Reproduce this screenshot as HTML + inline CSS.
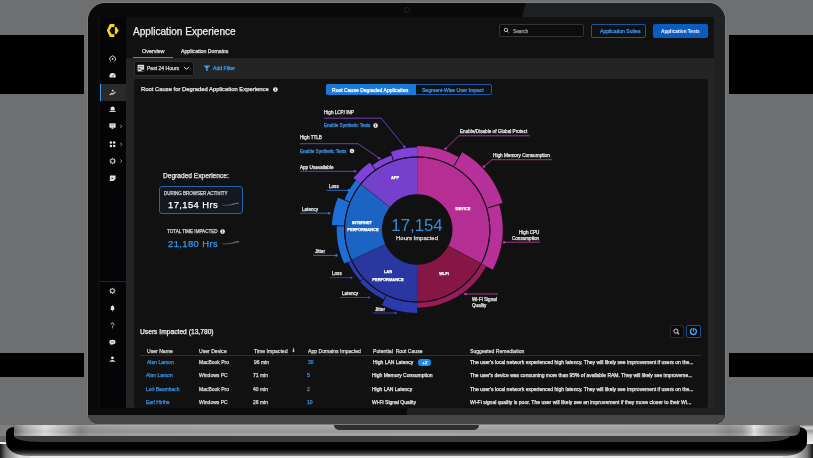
<!DOCTYPE html>
<html><head><meta charset="utf-8">
<style>
html,body{margin:0;padding:0;}
body{width:813px;height:458px;overflow:hidden;position:relative;background:#6e6f71;font-family:"Liberation Sans", sans-serif;}
.a{position:absolute;}
.t{position:absolute;white-space:nowrap;will-change:transform;-webkit-text-stroke:0.25px currentColor;}
svg{position:absolute;left:0;top:0;}
</style></head><body>
<!-- background artifacts -->
<div class="a" style="left:0;top:35px;width:84px;height:59px;background:#000"></div>
<div class="a" style="left:729px;top:35px;width:84px;height:59px;background:#000"></div>
<div class="a" style="left:0;top:353px;width:84px;height:24px;background:#000"></div>
<div class="a" style="left:729px;top:353px;width:84px;height:24px;background:#000"></div>
<!-- bottom background -->
<div class="a" style="left:0;top:425px;width:20px;height:11px;background:#7f7f7f"></div>
<div class="a" style="left:0;top:436px;width:20px;height:6px;background:#676767"></div>
<div class="a" style="left:793px;top:425px;width:20px;height:17px;background:linear-gradient(180deg,#8a8a8a 0,#d8d8d8 3px,#9a9a9a 6px,#d0d0d0 10px,#e8e8e8 17px)"></div>
<div class="a" style="left:0;top:441.5px;width:813px;height:17px;background:linear-gradient(180deg,#f0f0f0 0,#f0f0f0 2px,#c8c8c8 6px,#eee 16px)"></div>
<div class="a" style="left:0;top:443.5px;width:30px;height:15px;background:linear-gradient(90deg,#151515 0,#777 6px,#ddd 20px)"></div>
<div class="a" style="left:783px;top:443.5px;width:30px;height:15px;background:linear-gradient(270deg,#151515 0,#777 6px,#ddd 20px)"></div>
<!-- base shadow -->
<div class="a" style="left:6px;top:427px;width:801px;height:29px;background:linear-gradient(180deg,#000 0,#000 22px,#333 26px,#888 29px);border-radius:8px 8px 22px 22px / 6px 6px 14px 14px;"></div>
<!-- laptop lid -->
<div class="a" style="left:86.6px;top:2px;width:639.2px;height:423px;background:#7c7d7f;border-radius:18px 18px 11px 11px;"></div>
<div class="a" style="left:87.9px;top:3px;width:636.9px;height:421px;background:#0a0a0b;border-radius:17px 17px 10px 10px;overflow:hidden;">
  <div class="a" style="left:0;top:0;width:700px;height:430px;background:#1f2022;clip-path:polygon(438.1px 0,700px 0,700px 430px,319.1px 430px);"></div>
  <div class="a" style="left:-2px;top:412px;width:700px;height:12px;background:#454545;"></div>
</div>
<div class="a" style="left:403.8px;top:7.3px;width:4px;height:4px;border-radius:50%;border:0.8px solid #222;"></div>
<!-- base bar -->
<div class="a" style="left:14px;top:425px;width:786px;height:11px;border-radius:0 0 7px 0 / 0 0 6px 0;background:linear-gradient(90deg,#6a6a6a 0,#a8a8a8 11px,#dcdcdc 31px,#b0b0b0 52px,#858585 67px,#949494 76px,#9c9c9c 120px,#a2a2a2 400px,#9e9e9e 700px,#8a8a8a 715px,#9a9a9a 728px,#c8c8c8 737px,#e6e6e6 740px,#b0b0b0 752px,#777 770px,#4a4a4a 786px);"></div>
<div class="a" style="left:14px;top:425px;width:786px;height:11px;border-radius:0 0 7px 0 / 0 0 6px 0;background:linear-gradient(180deg,rgba(255,255,255,0.14) 0,rgba(255,255,255,0.03) 3px,rgba(0,0,0,0.06) 7px,rgba(255,255,255,0.10) 10px,rgba(0,0,0,0.1) 11px);"></div>
<div class="a" style="left:334px;top:425px;width:145px;height:5px;background:#2e2e2e;border-radius:0 0 6px 6px;"></div>
<div class="a" style="left:14px;top:436px;width:776px;height:6px;background:#3a3a3a;border-radius:0 0 30px 26px/0 0 6px 6px;"></div>
<!-- screen -->
<div class="a" style="left:100px;top:17px;width:614px;height:391px;background:#242424;overflow:hidden;">
  <div class="a" style="left:0;top:0;width:26px;height:391px;background:#050507;"></div>
  <div class="a" style="left:26px;top:0;width:588px;height:41px;background:#111111;"></div>
</div>
<div class="a" style="left:100px;top:281.2px;width:26px;height:0.9px;background:#262626;"></div>
<div class="a" style="left:99.3px;top:17px;width:0.8px;height:391px;background:#121214;"></div>
<!-- sidebar active -->
<div class="a" style="left:100px;top:84px;width:26px;height:17px;background:#2a2a2a;"></div>
<div class="a" style="left:99.5px;top:84px;width:1.6px;height:17px;background:#3a9ae8;"></div>
<!-- tab underline -->
<div class="a" style="left:133px;top:56.5px;width:39.5px;height:1.3px;background:#3a8fd8;"></div>
<!-- search -->
<div class="a" style="left:499px;top:23.5px;width:85px;height:13.5px;box-sizing:border-box;border:0.8px solid #333;border-radius:2px;background:#0d0d0d;"></div>
<div class="a" style="left:591.3px;top:23.5px;width:55px;height:14px;box-sizing:border-box;border:0.9px solid #1f5598;border-radius:2px;"></div>
<div class="a" style="left:652.7px;top:23.5px;width:55px;height:14px;border-radius:2px;background:#0b5cbf;"></div>
<!-- filter dropdown -->
<div class="a" style="left:133.8px;top:61.4px;width:60.5px;height:14.3px;box-sizing:border-box;border:0.8px solid #2e2e2e;border-radius:2px;background:#0d0d0d;"></div>
<!-- card -->
<div class="a" style="left:133.5px;top:79.2px;width:574.3px;height:329px;background:#111111;border-radius:3px;"></div>
<!-- toggle -->
<div class="a" style="left:325.9px;top:84.3px;width:166.3px;height:10.6px;box-sizing:border-box;border:0.8px solid #1b57a6;border-radius:2px;"></div>
<div class="a" style="left:325.9px;top:84.3px;width:89.7px;height:10.6px;background:#1a78d8;border-radius:2px 0 0 2px;"></div>
<!-- stat box -->
<div class="a" style="left:159.2px;top:186.2px;width:83.6px;height:27.8px;box-sizing:border-box;border:0.9px solid #2a64a8;border-radius:3px;background:#141820;"></div>
<!-- table header line -->
<div class="a" style="left:140px;top:354.7px;width:561px;height:0.7px;background:#2e2e2e;"></div>
<!-- badge -->
<div class="a" style="left:417.8px;top:359.3px;width:13.6px;height:6.5px;border-radius:3.2px;background:#1a8cf0;"></div>
<!-- icon buttons -->
<div class="a" style="left:669.5px;top:324.6px;width:14.4px;height:13.7px;box-sizing:border-box;border:0.8px solid #282828;border-radius:2px;background:#0a0a0a;"></div>
<div class="a" style="left:686px;top:324.6px;width:14.5px;height:13.7px;box-sizing:border-box;border:0.9px solid #1c4f94;border-radius:2px;background:#07090c;"></div>
<!-- screen bottom clip: laptop bezel below screen -->
<div class="a" style="left:87.9px;top:408px;width:636.9px;height:6.5px;background:#0a0a0b;"></div>
<div class="a" style="left:87.9px;top:408px;width:636.9px;height:6.5px;background:#1f2022;clip-path:polygon(319.6px 0,637px 0,637px 7px,318.6px 7px);"></div>
<div class="a" style="left:714px;top:17px;width:10.5px;height:391px;background:#1f2022;"></div>

<svg width="813" height="458" viewBox="0 0 813 458">
<defs><linearGradient id="spk" x1="0" x2="1" y1="0" y2="0"><stop offset="0" stop-color="#2a3550"/><stop offset="1" stop-color="#777"/></linearGradient></defs>
<path d="M417.20,157.40 A72.1,72.1 0 0 1 480.86,263.35 L448.37,246.07 A35.3,35.3 0 0 0 417.20,194.20 Z" fill="#b52e93" />
<path d="M480.86,263.35 A72.1,72.1 0 0 1 417.20,301.60 L417.20,264.80 A35.3,35.3 0 0 0 448.37,246.07 Z" fill="#861646" />
<path d="M417.20,301.60 A72.1,72.1 0 0 1 351.86,259.97 L385.21,244.42 A35.3,35.3 0 0 0 417.20,264.80 Z" fill="#2a37a0" />
<path d="M351.86,259.97 A72.1,72.1 0 0 1 361.17,184.13 L389.77,207.28 A35.3,35.3 0 0 0 385.21,244.42 Z" fill="#1b64c4" />
<path d="M361.17,184.13 A72.1,72.1 0 0 1 417.20,157.40 L417.20,194.20 A35.3,35.3 0 0 0 389.77,207.28 Z" fill="#7540cc" />
<path d="M417.20,146.10 A83.4,83.4 0 0 1 458.90,157.27 L453.75,166.19 A73.1,73.1 0 0 0 417.20,156.40 Z" fill="#b8309a" />
<path d="M461.95,151.99 A89.5,89.5 0 0 1 502.79,203.33 L487.11,208.13 A73.1,73.1 0 0 0 453.75,166.19 Z" fill="#b8309a" />
<path d="M499.06,204.47 A85.6,85.6 0 0 1 492.78,269.69 L481.74,263.82 A73.1,73.1 0 0 0 487.11,208.13 Z" fill="#b8309a" />
<path d="M486.25,266.21 A78.2,78.2 0 0 1 417.20,307.70 L417.20,302.60 A73.1,73.1 0 0 0 481.74,263.82 Z" fill="#981c5a" />
<path d="M417.20,313.00 A83.5,83.5 0 0 1 381.52,304.99 L385.96,295.59 A73.1,73.1 0 0 0 417.20,302.60 Z" fill="#2c3bb0" />
<path d="M384.08,299.57 A77.5,77.5 0 0 1 359.97,281.76 L363.22,278.79 A73.1,73.1 0 0 0 385.96,295.59 Z" fill="#2c3bb0" />
<path d="M360.71,281.08 A76.5,76.5 0 0 1 347.87,261.83 L350.95,260.39 A73.1,73.1 0 0 0 363.22,278.79 Z" fill="#2c3bb0" />
<path d="M344.24,263.52 A80.5,80.5 0 0 1 336.79,225.71 L344.18,226.06 A73.1,73.1 0 0 0 350.95,260.39 Z" fill="#1e6ed6" />
<path d="M331.79,225.47 A85.5,85.5 0 0 1 338.04,197.19 L349.52,201.88 A73.1,73.1 0 0 0 344.18,226.06 Z" fill="#1e6ed6" />
<path d="M344.43,199.80 A78.6,78.6 0 0 1 356.12,180.04 L360.39,183.50 A73.1,73.1 0 0 0 349.52,201.88 Z" fill="#1e6ed6" />
<path d="M353.47,177.90 A82.0,82.0 0 0 1 370.17,162.33 L375.27,169.62 A73.1,73.1 0 0 0 360.39,183.50 Z" fill="#7f42da" />
<path d="M372.17,165.20 A78.5,78.5 0 0 1 391.64,155.28 L393.40,160.38 A73.1,73.1 0 0 0 375.27,169.62 Z" fill="#7f42da" />
<path d="M390.54,152.06 A81.9,81.9 0 0 1 417.20,147.60 L417.20,156.40 A73.1,73.1 0 0 0 393.40,160.38 Z" fill="#7f42da" />
<line x1="453.75" y1="166.19" x2="463.20" y2="149.83" stroke="#111" stroke-width="0.9"/>
<line x1="487.11" y1="208.13" x2="505.18" y2="202.60" stroke="#111" stroke-width="0.9"/>
<line x1="385.96" y1="295.59" x2="377.88" y2="312.68" stroke="#111" stroke-width="0.9"/>
<line x1="363.22" y1="278.79" x2="349.26" y2="291.54" stroke="#111" stroke-width="0.9"/>
<line x1="344.18" y1="226.06" x2="325.30" y2="225.17" stroke="#111" stroke-width="0.9"/>
<line x1="349.52" y1="201.88" x2="332.02" y2="194.74" stroke="#111" stroke-width="0.9"/>
<line x1="375.27" y1="169.62" x2="364.43" y2="154.14" stroke="#111" stroke-width="0.9"/>
<line x1="393.40" y1="160.38" x2="387.25" y2="142.51" stroke="#111" stroke-width="0.9"/>
<line x1="448.37" y1="246.07" x2="480.86" y2="263.35" stroke="#222" stroke-width="0.6" opacity="0.7"/>
<line x1="385.21" y1="244.42" x2="351.86" y2="259.97" stroke="#222" stroke-width="0.6" opacity="0.7"/>
<line x1="389.77" y1="207.28" x2="361.17" y2="184.13" stroke="#222" stroke-width="0.6" opacity="0.7"/>
<circle cx="417.2" cy="229.5" r="72.60" fill="none" stroke="#1a1020" stroke-width="1.0"/>
<polyline points="323.7,118.2 381.2,118.2 404.5,146.8" fill="none" stroke="#7a3fd0" stroke-width="0.9"/>
<circle cx="404.5" cy="146.8" r="1.3" fill="#7a3fd0"/>
<polyline points="300,143.7 358.1,143.7 379.1,158.2" fill="none" stroke="#7a3fd0" stroke-width="0.9"/>
<circle cx="379.1" cy="158.2" r="1.3" fill="#7a3fd0"/>
<polyline points="300,171.3 355,171.3" fill="none" stroke="#7a3fd0" stroke-width="0.9"/>
<circle cx="355" cy="171.3" r="1.3" fill="#7a3fd0"/>
<polyline points="326.7,190.3 348.9,190.3" fill="none" stroke="#2577d6" stroke-width="0.9"/>
<circle cx="348.9" cy="190.3" r="1.3" fill="#2577d6"/>
<polyline points="300,213.2 329,213.2" fill="none" stroke="#2577d6" stroke-width="0.9"/>
<circle cx="329" cy="213.2" r="1.3" fill="#2577d6"/>
<polyline points="313,255.4 336.4,255.4" fill="none" stroke="#2577d6" stroke-width="0.9"/>
<circle cx="336.4" cy="255.4" r="1.3" fill="#2577d6"/>
<polyline points="329.5,277.7 351.2,277.7" fill="none" stroke="#3641b8" stroke-width="0.9"/>
<circle cx="351.2" cy="277.7" r="1.3" fill="#3641b8"/>
<polyline points="340,297.5 368.8,297.5" fill="none" stroke="#3641b8" stroke-width="0.9"/>
<circle cx="368.8" cy="297.5" r="1.3" fill="#3641b8"/>
<polyline points="373,313 395.5,313" fill="none" stroke="#3641b8" stroke-width="0.9"/>
<circle cx="395.5" cy="313" r="1.3" fill="#3641b8"/>
<polyline points="529.6,135.8 458.8,135.8 445.5,148.8" fill="none" stroke="#c0359f" stroke-width="0.9"/>
<circle cx="445.5" cy="148.8" r="1.3" fill="#c0359f"/>
<polyline points="552,159.7 492,159.7 483.9,166.6" fill="none" stroke="#c0359f" stroke-width="0.9"/>
<circle cx="483.9" cy="166.6" r="1.3" fill="#c0359f"/>
<polyline points="540,242.2 504.2,242.2" fill="none" stroke="#c0359f" stroke-width="0.9"/>
<circle cx="504.2" cy="242.2" r="1.3" fill="#c0359f"/>
<polyline points="498,294 465.4,294" fill="none" stroke="#c0359f" stroke-width="0.9"/>
<circle cx="465.4" cy="294" r="1.3" fill="#c0359f"/>
<polygon points="109.9,24 114.4,24 114.4,26.9 111.7,26.9 109.5,30.6 111.7,34.3 114.4,34.3 114.4,37.1 109.9,37.1 106.8,30.6" fill="#f7d417"/>
<polygon points="114.9,27.1 116.4,27.1 118.7,30.6 116.4,34.1 114.9,34.1" fill="#f7d417"/>
<path d="M110.9,61.3 A2.9,2.9 0 1 1 114.3,61.3" fill="none" stroke="#e4e4e4" stroke-width="0.9"/><circle cx="112.6" cy="58.9" r="0.9" fill="#e4e4e4"/>
<path d="M109.5,77.6 L109.5,76 A3.1,3.1 0 0 1 115.7,76 L115.7,77.6 Z" fill="#e4e4e4"/><line x1="112.3" y1="76.6" x2="114" y2="74.6" stroke="#050507" stroke-width="0.7"/>
<polyline points="109.7,95.1 111.6,93.5 113,94.2 115.4,91.8" fill="none" stroke="#e4e4e4" stroke-width="1.1"/><circle cx="112.7" cy="90.7" r="0.9" fill="#e4e4e4"/>
<path d="M110.6,110.4 L110.6,108.6 A2,2 0 0 1 114.6,108.6 L114.6,110.4 Z" fill="#e4e4e4"/><rect x="109.5" y="111" width="6.2" height="0.9" fill="#e4e4e4"/>
<rect x="109.4" y="123.4" width="6.2" height="4.3" fill="#e4e4e4"/><rect x="111.5" y="127.7" width="2" height="1.1" fill="#e4e4e4"/><path d="M110.8,125.3 L112.4,124.8 L114,125.6" stroke="#333" stroke-width="0.5" fill="none"/>
<polyline points="120.4,142.7 121.8,144.2 120.4,145.7" fill="none" stroke="#bbb" stroke-width="0.8"/>
<polyline points="120.4,159.5 121.8,161.0 120.4,162.5" fill="none" stroke="#bbb" stroke-width="0.8"/>
<polyline points="120.4,124.8 121.8,126.3 120.4,127.8" fill="none" stroke="#bbb" stroke-width="0.8"/>
<circle cx="110.9" cy="142.6" r="1.25" fill="#e4e4e4"/>
<circle cx="110.9" cy="145.9" r="1.25" fill="#e4e4e4"/>
<circle cx="114.2" cy="142.6" r="1.25" fill="#e4e4e4"/>
<circle cx="114.2" cy="145.9" r="1.25" fill="#e4e4e4"/>
<circle cx="112.6" cy="161.0" r="2.0" fill="none" stroke="#e4e4e4" stroke-width="0.9"/><circle cx="115.30" cy="161.00" r="0.55" fill="#e4e4e4"/><circle cx="114.51" cy="162.91" r="0.55" fill="#e4e4e4"/><circle cx="112.60" cy="163.70" r="0.55" fill="#e4e4e4"/><circle cx="110.69" cy="162.91" r="0.55" fill="#e4e4e4"/><circle cx="109.90" cy="161.00" r="0.55" fill="#e4e4e4"/><circle cx="110.69" cy="159.09" r="0.55" fill="#e4e4e4"/><circle cx="112.60" cy="158.30" r="0.55" fill="#e4e4e4"/><circle cx="114.51" cy="159.09" r="0.55" fill="#e4e4e4"/>
<path d="M109.9,175.4 L115.5,175.4 L115.5,179 L113.3,181.1 L109.9,181.1 Z" fill="#e4e4e4"/><path d="M111.6,177.2 L113.6,178.3 L111.6,179.4 Z" fill="#333"/>
<circle cx="112.4" cy="290.8" r="1.9" fill="none" stroke="#e4e4e4" stroke-width="0.9"/><circle cx="115.00" cy="290.80" r="0.55" fill="#e4e4e4"/><circle cx="114.24" cy="292.64" r="0.55" fill="#e4e4e4"/><circle cx="112.40" cy="293.40" r="0.55" fill="#e4e4e4"/><circle cx="110.56" cy="292.64" r="0.55" fill="#e4e4e4"/><circle cx="109.80" cy="290.80" r="0.55" fill="#e4e4e4"/><circle cx="110.56" cy="288.96" r="0.55" fill="#e4e4e4"/><circle cx="112.40" cy="288.20" r="0.55" fill="#e4e4e4"/><circle cx="114.24" cy="288.96" r="0.55" fill="#e4e4e4"/>
<path d="M110.4,310 L110.8,309.3 L110.8,307.4 A1.7,1.7 0 0 1 114.2,307.4 L114.2,309.3 L114.6,310 Z" fill="#e4e4e4"/><circle cx="112.5" cy="310.8" r="0.6" fill="#e4e4e4"/><rect x="112.2" y="305" width="0.6" height="0.8" fill="#e4e4e4"/>
<path d="M111.2,324.4 A1.3,1.3 0 1 1 113.2,325.4 L112.5,326 L112.5,326.6" fill="none" stroke="#e4e4e4" stroke-width="0.85"/><circle cx="112.5" cy="327.8" r="0.5" fill="#e4e4e4"/>
<ellipse cx="112.4" cy="342.1" rx="3.1" ry="2.3" fill="#e4e4e4"/><path d="M110.6,343.9 L110.2,345.2 L112,344.3 Z" fill="#e4e4e4"/><rect x="110.8" y="341.7" width="3.2" height="0.7" fill="#444"/>
<circle cx="112.4" cy="357.9" r="1.35" fill="#e4e4e4"/><path d="M109.6,361.2 Q112.4,358.9 115.2,361.2 Z" fill="#e4e4e4"/><rect x="109.6" y="361" width="5.6" height="0.6" fill="#e4e4e4"/>
<circle cx="506" cy="30" r="1.7" fill="none" stroke="#cfcfcf" stroke-width="0.85"/><line x1="507.2" y1="31.2" x2="508.5" y2="32.5" stroke="#cfcfcf" stroke-width="0.9"/>
<rect x="137.6" y="64.8" width="6.5" height="6.6" fill="#e4e4e4"/><rect x="138.3" y="66.6" width="5.1" height="0.5" fill="#111"/><rect x="138.3" y="68.3" width="2.2" height="1.2" fill="#111"/><rect x="141.5" y="69.6" width="2.6" height="1.8" fill="#111"/>
<polyline points="184.1,66.9 186.5,69.4 188.9,66.9" fill="none" stroke="#e6e6e6" stroke-width="1"/>
<path d="M203.7,65.4 L210.1,65.4 L207.6,68.5 L207.6,71.1 L206.2,71.1 L206.2,68.5 Z" fill="#3aa6f2"/>
<circle cx="275.4" cy="89.6" r="2.4" fill="#e8e8e8"/><rect x="275.05" y="89.20" width="0.7" height="1.6" fill="#111"/><circle cx="275.4" cy="88.45" r="0.4" fill="#111"/>
<circle cx="375.6" cy="125.6" r="2.3" fill="#e8e8e8"/><rect x="375.25" y="125.20" width="0.7" height="1.6" fill="#111"/><circle cx="375.6" cy="124.45" r="0.4" fill="#111"/>
<circle cx="352.0" cy="151.0" r="2.3" fill="#e8e8e8"/><rect x="351.65" y="150.60" width="0.7" height="1.6" fill="#111"/><circle cx="352.0" cy="149.85" r="0.4" fill="#111"/>
<circle cx="222.6" cy="231.6" r="2.4" fill="#e8e8e8"/><rect x="222.25" y="231.20" width="0.7" height="1.6" fill="#111"/><circle cx="222.6" cy="230.45" r="0.4" fill="#111"/>
<polyline points="222,205.3 225,205.10000000000002 227,205.4 229,204.8 231,204.9 232.5,204.20000000000002 234,204.3 235.5,203.3 237,203.5 239,203.0" fill="none" stroke="url(#spk)" stroke-width="1.2"/>
<polyline points="222,243.9 225,243.70000000000002 227,244.0 229,243.4 231,243.5 232.5,242.8 234,242.9 235.5,241.9 237,242.1 239,241.6" fill="none" stroke="url(#spk)" stroke-width="1.2"/>
<circle cx="675.9" cy="331.1" r="2.1" fill="none" stroke="#dcdcdc" stroke-width="0.95"/><line x1="677.4" y1="332.6" x2="679" y2="334.3" stroke="#dcdcdc" stroke-width="1.1"/>
<path d="M692.4,328.6 A3,3 0 1 0 694.4,328.6" fill="none" stroke="#38a6f5" stroke-width="1.5"/><line x1="693.4" y1="327.8" x2="693.4" y2="331.8" stroke="#38a6f5" stroke-width="1"/>
<line x1="293.5" y1="347.9" x2="293.5" y2="351.6" stroke="#dcdcdc" stroke-width="0.8"/><path d="M292.1,350.6 L293.5,352.6 L294.9,350.6 Z" fill="#dcdcdc"/>
</svg>
<div class="t" style="left:133.40px;top:26.75px;font-size:10.1px;line-height:10.1px;color:#eeeeee;font-weight:400;">Application Experience</div>
<div class="t" style="left:141.60px;top:49.19px;font-size:5.4px;line-height:5.4px;color:#e0e0e0;font-weight:400;">Overview</div>
<div class="t" style="left:181.00px;top:49.30px;font-size:5.2px;line-height:5.2px;color:#e0e0e0;font-weight:400;">Application Domains</div>
<div class="t" style="left:512.70px;top:29.50px;font-size:4.8px;line-height:4.8px;color:#9a9a9a;font-weight:400;">Search</div>
<div class="t" style="left:599.50px;top:28.95px;font-size:5.1px;line-height:5.1px;color:#3c95f0;font-weight:400;">Application Suites</div>
<div class="t" style="left:660.60px;top:29.56px;font-size:4.7px;line-height:4.7px;color:#ffffff;font-weight:700;-webkit-text-stroke:0;">Application Tests</div>
<div class="t" style="left:146.80px;top:65.87px;font-size:5.05px;line-height:5.05px;color:#d8d8d8;font-weight:400;">Past 24 Hours</div>
<div class="t" style="left:213.00px;top:65.82px;font-size:5.15px;line-height:5.15px;color:#3a9af0;font-weight:400;">Add Filter</div>
<div class="t" style="left:140.50px;top:86.55px;font-size:5.87px;line-height:5.87px;color:#e8e8e8;font-weight:400;">Root Cause for Degraded Application Experience</div>
<div class="t" style="left:331.70px;top:87.56px;font-size:5.07px;line-height:5.07px;color:#ffffff;font-weight:400;">Root Cause Degraded Application</div>
<div class="t" style="left:421.70px;top:87.57px;font-size:5.05px;line-height:5.05px;color:#3c95f0;font-weight:400;">Segment-Wise User Impact</div>
<div class="t" style="left:163.10px;top:172.56px;font-size:6.62px;line-height:6.62px;color:#e8e8e8;font-weight:400;">Degraded Experience:</div>
<div class="t" style="left:164.20px;top:191.86px;font-size:4.5px;line-height:4.5px;color:#cfcfcf;font-weight:400;">DURING BROWSER ACTIVITY</div>
<div class="t" style="left:167.90px;top:199.81px;font-size:9.4px;line-height:9.4px;color:#ffffff;font-weight:400;letter-spacing:0.42px;">17,154 Hrs</div>
<div class="t" style="left:167.00px;top:230.03px;font-size:4.56px;line-height:4.56px;color:#d0d0d0;font-weight:400;">TOTAL TIME IMPACTED</div>
<div class="t" style="left:167.50px;top:238.81px;font-size:9.4px;line-height:9.4px;color:#3b9ae8;font-weight:400;letter-spacing:0.42px;">21,180 Hrs</div>
<div class="t" style="left:323.70px;top:111.11px;font-size:4.6px;line-height:4.6px;color:#e8e8e8;font-weight:400;">High LCP/ INP</div>
<div class="t" style="left:323.70px;top:124.41px;font-size:4.6px;line-height:4.6px;color:#3a8fe0;font-weight:400;">Enable Synthetic Tests</div>
<div class="t" style="left:300.00px;top:136.41px;font-size:4.6px;line-height:4.6px;color:#e8e8e8;font-weight:400;">High TTLB</div>
<div class="t" style="left:300.00px;top:149.51px;font-size:4.6px;line-height:4.6px;color:#3a8fe0;font-weight:400;">Enable Synthetic Tests</div>
<div class="t" style="left:300.00px;top:165.81px;font-size:4.6px;line-height:4.6px;color:#e8e8e8;font-weight:400;">App Unavailable</div>
<div class="t" style="left:329.00px;top:184.51px;font-size:4.6px;line-height:4.6px;color:#e8e8e8;font-weight:400;">Loss</div>
<div class="t" style="left:302.00px;top:207.51px;font-size:4.6px;line-height:4.6px;color:#e8e8e8;font-weight:400;">Latency</div>
<div class="t" style="left:315.00px;top:249.61px;font-size:4.6px;line-height:4.6px;color:#e8e8e8;font-weight:400;">Jitter</div>
<div class="t" style="left:331.70px;top:271.91px;font-size:4.6px;line-height:4.6px;color:#e8e8e8;font-weight:400;">Loss</div>
<div class="t" style="left:342.00px;top:291.91px;font-size:4.6px;line-height:4.6px;color:#e8e8e8;font-weight:400;">Latency</div>
<div class="t" style="left:375.00px;top:307.71px;font-size:4.6px;line-height:4.6px;color:#e8e8e8;font-weight:400;">Jitter</div>
<div class="t" style="left:460.40px;top:130.27px;font-size:4.68px;line-height:4.68px;color:#e8e8e8;font-weight:400;">Enable/Disable of Global Protect</div>
<div class="t" style="left:493.20px;top:154.16px;font-size:4.69px;line-height:4.69px;color:#e8e8e8;font-weight:400;">High Memory Consumption</div>
<div class="t" style="right:273.50px;top:231.41px;font-size:4.6px;line-height:4.6px;color:#e8e8e8;font-weight:400;">High CPU</div>
<div class="t" style="right:273.50px;top:236.81px;font-size:4.6px;line-height:4.6px;color:#e8e8e8;font-weight:400;">Consumption</div>
<div class="t" style="left:472.00px;top:298.01px;font-size:4.6px;line-height:4.6px;color:#e8e8e8;font-weight:400;">Wi-Fi Signal</div>
<div class="t" style="left:472.00px;top:303.51px;font-size:4.6px;line-height:4.6px;color:#e8e8e8;font-weight:400;">Quality</div>
<div class="t" style="left:417.30px;transform:translateX(-50%);top:217.76px;font-size:16.8px;line-height:16.8px;color:#2e8fe0;font-weight:400;-webkit-text-stroke:0;">17,154</div>
<div class="t" style="left:416.80px;transform:translateX(-50%);top:236.01px;font-size:5.95px;line-height:5.95px;color:#dddddd;font-weight:400;">Hours Impacted</div>
<div class="t" style="left:394.50px;transform:translateX(-50%);top:175.92px;font-size:4.0px;line-height:4.0px;color:#ffffff;font-weight:700;">APP</div>
<div class="t" style="left:463.20px;transform:translateX(-50%);top:206.72px;font-size:4.0px;line-height:4.0px;color:#ffffff;font-weight:700;">DEVICE</div>
<div class="t" style="left:361.50px;transform:translateX(-50%);top:221.02px;font-size:4.0px;line-height:4.0px;color:#ffffff;font-weight:700;">INTERNET</div>
<div class="t" style="left:363.40px;transform:translateX(-50%);top:228.32px;font-size:4.0px;line-height:4.0px;color:#ffffff;font-weight:700;">PERFORMANCE</div>
<div class="t" style="left:388.00px;transform:translateX(-50%);top:270.02px;font-size:4.0px;line-height:4.0px;color:#ffffff;font-weight:700;">LAN</div>
<div class="t" style="left:387.50px;transform:translateX(-50%);top:277.72px;font-size:4.0px;line-height:4.0px;color:#ffffff;font-weight:700;">PERFORMANCE</div>
<div class="t" style="left:444.00px;transform:translateX(-50%);top:272.22px;font-size:4.0px;line-height:4.0px;color:#ffffff;font-weight:700;">Wi-Fi</div>
<div class="t" style="left:140.40px;top:328.52px;font-size:6.7px;line-height:6.7px;color:#eeeeee;font-weight:400;">Users Impacted (13,780)</div>
<div class="t" style="left:147.00px;top:349.05px;font-size:5.1px;line-height:5.1px;color:#dcdcdc;font-weight:400;">User Name</div>
<div class="t" style="left:199.20px;top:349.05px;font-size:5.1px;line-height:5.1px;color:#dcdcdc;font-weight:400;">User Device</div>
<div class="t" style="left:254.00px;top:349.05px;font-size:5.1px;line-height:5.1px;color:#dcdcdc;font-weight:400;">Time Impacted</div>
<div class="t" style="left:307.90px;top:349.05px;font-size:5.1px;line-height:5.1px;color:#dcdcdc;font-weight:400;">App Domains Impacted</div>
<div class="t" style="left:372.80px;top:349.05px;font-size:5.1px;line-height:5.1px;color:#dcdcdc;font-weight:400;">Potential&nbsp; Root Cause</div>
<div class="t" style="left:470.20px;top:349.05px;font-size:5.1px;line-height:5.1px;color:#dcdcdc;font-weight:400;">Suggested Remediation</div>
<div class="t" style="left:147.10px;top:359.60px;font-size:5.0px;line-height:5.0px;color:#3a8fe0;font-weight:400;">Alan Larson</div>
<div class="t" style="left:199.20px;top:359.60px;font-size:5.0px;line-height:5.0px;color:#dcdcdc;font-weight:400;">MacBook Pro</div>
<div class="t" style="left:254.00px;top:359.60px;font-size:5.0px;line-height:5.0px;color:#dcdcdc;font-weight:400;">96 min</div>
<div class="t" style="left:307.90px;top:359.60px;font-size:5.0px;line-height:5.0px;color:#3a8fe0;font-weight:400;">30</div>
<div class="t" style="left:372.80px;top:359.60px;font-size:5.0px;line-height:5.0px;color:#e6e6e6;font-weight:400;">High LAN Latency</div>
<div class="t" style="left:470.20px;top:359.57px;font-size:5.05px;line-height:5.05px;color:#e6e6e6;font-weight:400;">The user's local network experienced high latency. They will likely see improvement if users on the...</div>
<div class="t" style="left:146.30px;top:373.10px;font-size:5.0px;line-height:5.0px;color:#3a8fe0;font-weight:400;">Alan Larson</div>
<div class="t" style="left:198.60px;top:373.10px;font-size:5.0px;line-height:5.0px;color:#dcdcdc;font-weight:400;">Windows PC</div>
<div class="t" style="left:253.40px;top:373.10px;font-size:5.0px;line-height:5.0px;color:#dcdcdc;font-weight:400;">71 min</div>
<div class="t" style="left:307.30px;top:373.10px;font-size:5.0px;line-height:5.0px;color:#3a8fe0;font-weight:400;">5</div>
<div class="t" style="left:372.20px;top:373.10px;font-size:5.0px;line-height:5.0px;color:#e6e6e6;font-weight:400;">High Memory Consumption</div>
<div class="t" style="left:469.60px;top:373.11px;font-size:4.98px;line-height:4.98px;color:#e6e6e6;font-weight:400;">The user's device was consuming more than 95% of available RAM. They will likely see improveme...</div>
<div class="t" style="left:146.30px;top:386.60px;font-size:5.0px;line-height:5.0px;color:#3a8fe0;font-weight:400;">Lori Baumbach</div>
<div class="t" style="left:198.60px;top:386.60px;font-size:5.0px;line-height:5.0px;color:#dcdcdc;font-weight:400;">MacBook Pro</div>
<div class="t" style="left:253.40px;top:386.60px;font-size:5.0px;line-height:5.0px;color:#dcdcdc;font-weight:400;">40 min</div>
<div class="t" style="left:307.30px;top:386.60px;font-size:5.0px;line-height:5.0px;color:#3a8fe0;font-weight:400;">2</div>
<div class="t" style="left:372.20px;top:386.60px;font-size:5.0px;line-height:5.0px;color:#e6e6e6;font-weight:400;">High LAN Latency</div>
<div class="t" style="left:469.60px;top:386.57px;font-size:5.05px;line-height:5.05px;color:#e6e6e6;font-weight:400;">The user's local network experienced high latency. They will likely see improvement if users on the...</div>
<div class="t" style="left:146.30px;top:400.30px;font-size:5.0px;line-height:5.0px;color:#3a8fe0;font-weight:400;">Earl Hirthe</div>
<div class="t" style="left:198.60px;top:400.30px;font-size:5.0px;line-height:5.0px;color:#dcdcdc;font-weight:400;">Windows PC</div>
<div class="t" style="left:253.40px;top:400.30px;font-size:5.0px;line-height:5.0px;color:#dcdcdc;font-weight:400;">28 min</div>
<div class="t" style="left:307.30px;top:400.30px;font-size:5.0px;line-height:5.0px;color:#3a8fe0;font-weight:400;">10</div>
<div class="t" style="left:372.20px;top:400.30px;font-size:5.0px;line-height:5.0px;color:#e6e6e6;font-weight:400;">Wi-Fi Signal Quality</div>
<div class="t" style="left:469.60px;top:400.27px;font-size:5.05px;line-height:5.05px;color:#e6e6e6;font-weight:400;">Wi-Fi signal quality is poor. The user will likely see an improvement if they move closer to their Wi...</div>
<div class="t" style="left:424.60px;transform:translateX(-50%);top:360.52px;font-size:4.2px;line-height:4.2px;color:#ffffff;font-weight:400;">+2</div>
</body></html>
